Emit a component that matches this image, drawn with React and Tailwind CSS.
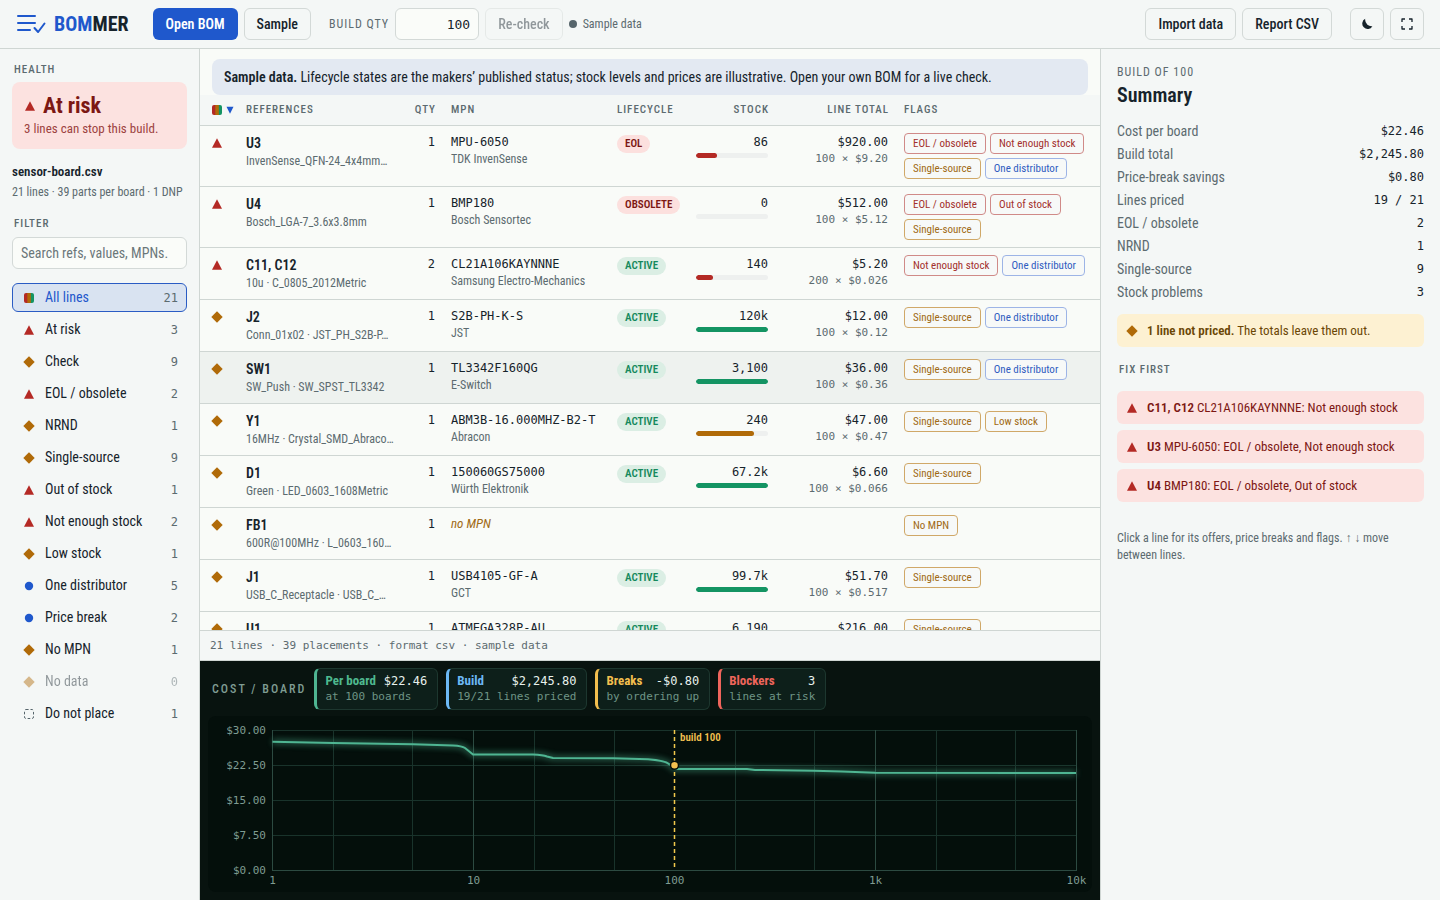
import clsx from "clsx";

const filters = [
    { label: "All lines", count: 21, icon: "all", active: true },
    { label: "At risk", count: 3, icon: "risk" },
    { label: "Check", count: 9, icon: "check" },
    { label: "EOL / obsolete", count: 2, icon: "risk" },
    { label: "NRND", count: 1, icon: "check" },
    { label: "Single-source", count: 9, icon: "check" },
    { label: "Out of stock", count: 1, icon: "risk" },
    { label: "Not enough stock", count: 2, icon: "risk" },
    { label: "Low stock", count: 1, icon: "check" },
    { label: "One distributor", count: 5, icon: "info" },
    { label: "Price break", count: 2, icon: "info" },
    { label: "No MPN", count: 1, icon: "check" },
    { label: "No data", count: 0, icon: "check", muted: true },
    { label: "Do not place", count: 1, icon: "dnp" },
];

const lines = [
    { icon: "risk", ref: "U3", desc: "InvenSense_QFN-24_4x4mm…", qty: 1, mpn: "MPU-6050", maker: "TDK InvenSense", life: "EOL", stock: "86", level: 29, bar: "bg-[#b42a25]", total: "$920.00", calc: "100 × $9.20", flags: ["EOL / obsolete", "Not enough stock", "Single-source", "One distributor"] },
    { icon: "risk", ref: "U4", desc: "Bosch_LGA-7_3.6x3.8mm", qty: 1, mpn: "BMP180", maker: "Bosch Sensortec", life: "OBSOLETE", stock: "0", level: 0, bar: "bg-[#b42a25]", total: "$512.00", calc: "100 × $5.12", flags: ["EOL / obsolete", "Out of stock", "Single-source"] },
    { icon: "risk", ref: "C11, C12", desc: "10u · C_0805_2012Metric", qty: 2, mpn: "CL21A106KAYNNNE", maker: "Samsung Electro-Mechanics", life: "ACTIVE", stock: "140", level: 23, bar: "bg-[#b42a25]", total: "$5.20", calc: "200 × $0.026", flags: ["Not enough stock", "One distributor"] },
    { icon: "check", ref: "J2", desc: "Conn_01x02 · JST_PH_S2B-P…", qty: 1, mpn: "S2B-PH-K-S", maker: "JST", life: "ACTIVE", stock: "120k", level: 100, bar: "bg-[#149463]", total: "$12.00", calc: "100 × $0.12", flags: ["Single-source", "One distributor"] },
    { icon: "check", ref: "SW1", desc: "SW_Push · SW_SPST_TL3342", qty: 1, mpn: "TL3342F160QG", maker: "E-Switch", life: "ACTIVE", stock: "3,100", level: 100, bar: "bg-[#149463]", total: "$36.00", calc: "100 × $0.36", flags: ["Single-source", "One distributor"], selected: true },
    { icon: "check", ref: "Y1", desc: "16MHz · Crystal_SMD_Abraco…", qty: 1, mpn: "ABM3B-16.000MHZ-B2-T", maker: "Abracon", life: "ACTIVE", stock: "240", level: 80, bar: "bg-[#b06a08]", total: "$47.00", calc: "100 × $0.47", flags: ["Single-source", "Low stock"] },
    { icon: "check", ref: "D1", desc: "Green · LED_0603_1608Metric", qty: 1, mpn: "150060GS75000", maker: "Würth Elektronik", life: "ACTIVE", stock: "67.2k", level: 100, bar: "bg-[#149463]", total: "$6.60", calc: "100 × $0.066", flags: ["Single-source"] },
    { icon: "check", ref: "FB1", desc: "600R@100MHz · L_0603_160…", qty: 1, flags: ["No MPN"] },
    { icon: "check", ref: "J1", desc: "USB_C_Receptacle · USB_C_…", qty: 1, mpn: "USB4105-GF-A", maker: "GCT", life: "ACTIVE", stock: "99.7k", level: 100, bar: "bg-[#149463]", total: "$51.70", calc: "100 × $0.517", flags: ["Single-source"] },
    { icon: "check", ref: "U1", qty: 1, mpn: "ATMEGA328P-AU", life: "ACTIVE", stock: "6,190", level: 100, bar: "bg-[#149463]", total: "$216.00", flags: ["Single-source"] },
];

const flagColors = {
    "EOL / obsolete": "border-[#d08a88] text-[#a3302c]",
    "Not enough stock": "border-[#d08a88] text-[#a3302c]",
    "Out of stock": "border-[#d08a88] text-[#a3302c]",
    "Single-source": "border-[#d0a868] text-[#a06a14]",
    "Low stock": "border-[#d0a868] text-[#a06a14]",
    "No MPN": "border-[#d0a868] text-[#a06a14]",
    "One distributor": "border-[#9db4e6] text-[#2f5cc0]",
};

const summary = [
    ["Cost per board", "$22.46"],
    ["Build total", "$2,245.80"],
    ["Price-break savings", "$0.80"],
    ["Lines priced", "19 / 21"],
    ["EOL / obsolete", "2"],
    ["NRND", "1"],
    ["Single-source", "9"],
    ["Stock problems", "3"],
];

const fixes = [
    { ref: "C11, C12", text: "CL21A106KAYNNNE: Not enough stock" },
    { ref: "U3", text: "MPU-6050: EOL / obsolete, Not enough stock" },
    { ref: "U4", text: "BMP180: EOL / obsolete, Out of stock" },
];

const kpis = [
    { name: "Per board", value: "$22.46", note: "at 100 boards", edge: "border-l-[#4fb592]", color: "text-[#4fb98f]" },
    { name: "Build", value: "$2,245.80", note: "19/21 lines priced", edge: "border-l-[#6cb8f5]", color: "text-[#6cb8f5]" },
    { name: "Breaks", value: "-$0.80", note: "by ordering up", edge: "border-l-[#f2be4e]", color: "text-[#f2be4e]" },
    { name: "Blockers", value: "3", note: "lines at risk", edge: "border-l-[#f0655c]", color: "text-[#f0655c]" },
];

const mono = "font-['DejaVu_Sans_Mono','Liberation_Mono',monospace]";
const label = "text-[11px] leading-[18px] font-medium tracking-[1px] text-[#5c6b70] uppercase";
const button = "h-8 rounded-md border border-[#d3d9d7] px-3 text-[14px] font-medium text-[#16232b]";

const StatusIcon = ({ type }) => (
    <svg width="12" height="12" viewBox="0 0 12 12" className="shrink-0" aria-hidden="true">
        {type === "risk" && <path d="M6 1.3 11 10.7H1z" fill="#b42a25" />}
        {type === "check" && <path d="M6 .3 11.7 6 6 11.7.3 6z" fill="#b06a08" />}
        {type === "info" && <circle cx="6" cy="6" r="4.2" fill="#1f58cc" />}
        {type === "dnp" && (
            <rect x="1.5" y="1.5" width="9" height="9" rx="1.5" fill="none" stroke="#56656b" strokeDasharray="2.6 1.9" />
        )}
        {type === "all" && (
            <>
                <defs>
                    <linearGradient id="mix">
                        <stop offset="0.33" stopColor="#b42a25" />
                        <stop offset="0.36" stopColor="#b06a08" />
                        <stop offset="0.64" stopColor="#b06a08" />
                        <stop offset="0.7" stopColor="#149463" />
                    </linearGradient>
                </defs>
                <rect x="1" y="1" width="10" height="10" rx="2" fill="url(#mix)" />
            </>
        )}
    </svg>
);

const Header = () => (
    <header className="flex shrink-0 items-center gap-1.5 border-b border-[#cfd6d3] bg-[#f4f7f6] px-4 py-2">
        {/* Logo */}
        <div className="mr-[18px] flex items-center gap-2">
            <svg width="30" height="22" viewBox="0 0 30 22" fill="none" stroke="#1f58cc" strokeWidth="2" strokeLinecap="round" strokeLinejoin="round">
                <path d="M2 3h17M2 10h17M2 17h12" />
                <path d="m18.5 15 3.6 4 6.4-8.500" />
            </svg>
            <span className="text-[20px] leading-8 font-bold text-[#16232b]">
                <span className="text-[#1f58cc]">BOM</span>MER
            </span>
        </div>

        <button className="h-8 rounded-md bg-[#1f58cc] px-[13px] text-[14px] font-semibold text-white">Open BOM</button>
        <button className={button}>Sample</button>
        <label htmlFor="qty" className="ml-3 text-[12px] tracking-[1px] text-[#5c6b70]">BUILD QTY</label>
        <input
            id="qty"
            defaultValue="100"
            className={clsx(mono, "h-8 w-[84px] rounded-md border border-[#d3d9d7] bg-[#fafcf9] px-2 text-right text-[13px] text-[#16232b]")}
        />
        <button disabled className={clsx(button, "opacity-45")}>Re-check</button>
        <span className="flex items-center gap-1.5 text-[12px] text-[#5c6b70]">
            <span className="size-2 rounded-full bg-[#56656b]" />
            Sample data
        </span>

        {/* Actions */}
        <div className="ml-auto flex gap-1.5">
            <button className={button}>Import data</button>
            <button className={button}>Report CSV</button>
            <button aria-label="Dark theme" className="ml-3 flex h-8 w-[34px] items-center justify-center rounded-md border border-[#d3d9d7]">
                <svg width="12" height="12" viewBox="0 0 12 12" fill="#16232b">
                    <path d="M4.2.8a5.4 5.4 0 1 0 7.2 7.4q-2.900.4-5-1.400Q3.700 4.300 4.200.8z" />
                </svg>
            </button>
            <button aria-label="Full screen" className="flex h-8 w-[34px] items-center justify-center rounded-md border border-[#d3d9d7]">
                <svg width="12" height="12" viewBox="0 0 12 12" fill="none" stroke="#16232b" strokeWidth="1.3" strokeLinejoin="round">
                    <path d="M1 4V1h3M8 1h3v3M11 8v3H8M4 11H1V8" />
                </svg>
            </button>
        </div>
    </header>
);

const Sidebar = () => (
    <aside className="w-[200px] shrink-0 border-r border-[#cfd6d3] bg-[#f4f7f6] px-3 pt-3">
        <h2 className={clsx(label, "pl-0.5")}>Health</h2>
        <div className="mt-[3px] rounded-lg bg-[#fce2e0] px-3 pt-2.5 pb-[11px] text-[#7c1713]">
            <div className="flex items-center gap-[7px] text-[22px] leading-7 font-bold">
                <StatusIcon type="risk" />
                At risk
            </div>
            <p className="text-[13px] leading-[18px] text-[#9c4340]">3 lines can stop this build.</p>
        </div>
        <p className="mt-3.5 text-[13px] leading-[18px] font-semibold text-[#16232b]">sensor-board.csv</p>
        <p className="mt-0.5 text-[12px] leading-[18px] whitespace-nowrap text-[#5c6b70]">21 lines · 39 parts per board · 1 DNP</p>
        <h2 className={clsx(label, "mt-3.5 pl-0.5")}>Filter</h2>
        <input
            aria-label="Search"
            placeholder="Search refs, values, MPNs."
            className="mt-1 h-8 w-full rounded-md border border-[#d3d9d7] bg-[#fafcf9] px-2 text-[14px] placeholder:text-[#6b7779]"
        />
        <ul className="mt-3.5 flex flex-col gap-[3px]">
            {filters.map((f) => (
                <li key={f.label}>
                    <button
                        className={clsx(
                            "flex h-[29px] w-full items-center gap-2.5 rounded-md border px-2 pl-2.5 text-left text-[14px]",
                            f.active ? "border-[#2a5cc4] bg-[#d9e3f1] text-[#1f58cc]" : "border-transparent text-[#16232b]",
                            f.muted && "opacity-45"
                        )}
                    >
                        <StatusIcon type={f.icon} />
                        {f.label}
                        <span className={clsx(mono, "ml-auto text-[12px] text-[#5c6b70]")}>{f.count}</span>
                    </button>
                </li>
            ))}
        </ul>
    </aside>
);

const Line = ({ line }) => (
    <tr className={clsx("h-13 border-b border-[#cfd6d3] align-top", line.selected && "bg-[#eef2ef]")}>
        <td className="pt-[11px] pl-[11px]">
            <StatusIcon type={line.icon} />
        </td>
        <td className="px-2 py-[7px]">
            <div className="text-[14px] leading-5 font-semibold">{line.ref}</div>
            <div className="truncate text-[12px] leading-4 text-[#5c6b70]">{line.desc}</div>
        </td>
        <td className={clsx(mono, "px-2 py-[7px] text-right text-[12px] leading-[18px]")}>{line.qty}</td>
        <td className="px-2 py-[7px] whitespace-nowrap">
            {line.mpn ? (
                <>
                    <div className={clsx(mono, "text-[12px] leading-[18px]")}>{line.mpn}</div>
                    <div className="text-[12px] leading-4 text-[#5c6b70]">{line.maker}</div>
                </>
            ) : (
                <em className="block text-[13px] leading-[18px] text-[#a06a14]">no MPN</em>
            )}
        </td>
        <td className="px-2 py-[9px]">
            {line.life && (
                <span
                    className={clsx(
                        "block w-fit rounded-full px-2 text-[11px] leading-[18px] font-semibold",
                        line.life === "ACTIVE" ? "bg-[#dbeee4] text-[#15895c]" : "bg-[#fce0de] text-[#7c1713]"
                    )}
                >
                    {line.life}
                </span>
            )}
        </td>
        <td className={clsx(mono, "px-2 py-[7px] text-right text-[12px] leading-[18px]")}>
            {line.stock}
            {line.stock && (
                <div className="mt-0.5 h-[5px] overflow-hidden rounded-full bg-[#eef0ef]">
                    <div className={clsx("h-full rounded-full", line.bar)} style={{ width: `${line.level}%` }} />
                </div>
            )}
        </td>
        <td className={clsx(mono, "px-2 py-[7px] text-right")}>
            <div className="text-[12px] leading-[18px]">{line.total}</div>
            <div className="text-[11px] leading-4 text-[#5c6b70]">{line.calc}</div>
        </td>
        <td className="px-2 py-[7px]">
            <div className="flex flex-wrap gap-1">
                {line.flags.map((flag) => (
                    <span key={flag} className={clsx("rounded border bg-[#f7f9f8] px-2 text-[11px] leading-[19px] whitespace-nowrap", flagColors[flag])}>
                        {flag}
                    </span>
                ))}
            </div>
        </td>
    </tr>
);

const BomTable = () => (
    <div className="min-h-0 flex-1 overflow-hidden bg-[#f9fbf8] pt-2.5">
        <p className="mx-3 rounded-lg bg-[#e3e9f2] px-3 py-2 text-[14px] leading-5">
            <b className="font-semibold">Sample data.</b> Lifecycle states are the makers’ published status; stock levels and prices are
            illustrative. Open your own BOM for a live check.
        </p>
        <table className="w-full table-fixed border-collapse">
            <colgroup>
                <col className="w-[38px]" />
                <col className="w-[164px]" />
                <col className="w-[41px]" />
                <col className="w-[166px]" />
                <col className="w-[79px]" />
                <col className="w-[88px]" />
                <col className="w-[120px]" />
                <col />
            </colgroup>
            <thead>
                <tr className={clsx(label, "h-[30px] border-b border-[#cfd6d3] bg-[#f4f7f6] text-left")}>
                    <th className="pl-[11px]">
                        <span className="flex items-center gap-[3px]">
                            <StatusIcon type="all" />
                            <svg width="8" height="8" viewBox="0 0 8 8" fill="#1f58cc">
                                <path d="M.5 .8h7L4 7.8z" />
                            </svg>
                        </span>
                    </th>
                    <th className="px-2 font-medium">References</th>
                    <th className="pr-[7px] text-right font-medium">Qty</th>
                    <th className="px-2 font-medium">MPN</th>
                    <th className="px-2 font-medium">Lifecycle</th>
                    <th className="pr-[7px] text-right font-medium">Stock</th>
                    <th className="pr-[7px] text-right font-medium">Line total</th>
                    <th className="px-2 font-medium">Flags</th>
                </tr>
            </thead>
            <tbody>
                {lines.map((line) => (
                    <Line key={line.ref} line={line} />
                ))}
            </tbody>
        </table>
    </div>
);

// Log x axis: 201 units per decade starting at x=64. Linear y axis: 35 units per $7.50.
const curve =
    "M64.5 25.8 125 27 205 28.2 245 29.5Q254 30 257 32L265 38.5H325Q335 38.8 339 40.5L345 42 405 42.2 440 43.2Q457 44.5 461 48L467 53H539L547 54 606 54.8 634 55.5 667 56.7 868 57";

const CostChart = () => (
    <svg viewBox="0 0 884 176" className="block w-full rounded-lg bg-[#040f0b]" role="img" aria-label="Cost per board by build quantity">
        <defs>
            <filter id="glow" x="-5%" y="-50%" width="110%" height="200%">
                <feGaussianBlur stdDeviation="3" />
            </filter>
        </defs>
        <g stroke="#19332b" shapeRendering="crispEdges">
            {[14.5, 49.5, 84.5, 119.5].map((y) => (
                <path key={y} d={`M64 ${y}H868`} />
            ))}
            {[125.5, 204.5, 326.5, 406.5, 527.5, 606.5, 728.5, 807.5].map((x) => (
                <path key={x} d={`M${x} 14V154`} />
            ))}
        </g>
        <path d="M64.5 14V154.5H868.5V14M265.5 14V154M667.5 14V154" fill="none" stroke="#2c4a41" shapeRendering="crispEdges" />
        <g fill="none" stroke="#4fb592" strokeLinejoin="round">
            <path d={curve} strokeWidth="4" opacity="0.6" filter="url(#glow)" />
            <path d={curve} strokeWidth="2" />
        </g>
        <path d="M466.5 14V154" stroke="#f2c94c" strokeWidth="1.5" strokeDasharray="4 3" />
        <circle cx="466.5" cy="49.3" r="4" fill="#f2c050" stroke="#040f0b" strokeWidth="1.5" />
        <text x="472" y="25" fill="#f2c050" fontSize="11" fontWeight="600">build 100</text>
        <g fill="#7f9c92" fontSize="11" className={mono}>
            {["$30.00", "$22.50", "$15.00", "$7.50", "$0.00"].map((t, i) => (
                <text key={t} x="58" y={18 + i * 35} textAnchor="end">{t}</text>
            ))}
            {["1", "10", "100", "1k", "10k"].map((t, i) => (
                <text key={t} x={64.5 + i * 201} y="168" textAnchor="middle">{t}</text>
            ))}
        </g>
    </svg>
);

const CostPanel = () => (
    <section className="shrink-0 bg-[#08130f] px-2 pt-[7px] pb-2">
        <div className="flex items-center gap-2">
            <h2 className="pl-1 text-[12px] leading-4 font-medium tracking-[2px] text-[#7f9c92]">COST / BOARD</h2>
            {kpis.map((k) => (
                <div key={k.name} className={clsx("rounded-md border border-l-3 border-[#1d372f] bg-[#0d1f1a] py-1 pr-2.5 pl-2", k.edge)}>
                    <div className="flex justify-between gap-2 leading-4">
                        <b className={clsx("text-[13px] font-bold", k.color)}>{k.name}</b>
                        <span className={clsx(mono, "text-[12px] font-medium text-[#e8f1ed]")}>{k.value}</span>
                    </div>
                    <div className={clsx(mono, "text-[11px] leading-4 text-[#6f9586]")}>{k.note}</div>
                </div>
            ))}
        </div>
        <div className="mt-1.5">
            <CostChart />
        </div>
    </section>
);

const Summary = () => (
    <aside className="w-[340px] shrink-0 border-l border-[#cfd6d3] bg-[#f4f7f6] px-4 pt-[15px]">
        <p className="text-[12px] leading-4 tracking-[1px] text-[#5c6b70]">BUILD OF 100</p>
        <h1 className="mt-0.5 text-[20px] leading-[26px] font-semibold">Summary</h1>
        <dl className="mt-3">
            {summary.map(([name, value]) => (
                <div key={name} className="flex h-[23px] items-start justify-between">
                    <dt className="text-[14px] leading-[22px] text-[#5c6b70]">{name}</dt>
                    <dd className={clsx(mono, "text-[12px] leading-[22px]")}>{value}</dd>
                </div>
            ))}
        </dl>
        <p className="mt-2.5 flex items-center gap-[9px] rounded-md bg-[#fdf1d2] px-[9px] text-[13px] leading-[33px] text-[#6a4605]">
            <StatusIcon type="check" />
            <span>
                <b className="font-semibold">1 line not priced.</b> The totals leave them out.
            </span>
        </p>
        <h2 className={clsx(label, "mt-3.5 pl-0.5")}>Fix first</h2>
        <ul className="mt-3 flex flex-col gap-1.5">
            {fixes.map((fix) => (
                <li key={fix.ref}>
                    <button className="flex w-full items-center gap-[9px] rounded-md bg-[#fce2e0] px-[9px] text-left text-[13px] leading-[33px] text-[#7c1713]">
                        <StatusIcon type="risk" />
                        <span>
                            <b className="font-semibold">{fix.ref}</b> {fix.text}
                        </span>
                    </button>
                </li>
            ))}
        </ul>
        <p className="mt-7 text-[12px] leading-[17px] text-[#5c6b70]">
            Click a line for its offers, price breaks and flags. ↑ ↓ move between lines.
        </p>
    </aside>
);

const App = () => {
    return (
        <div className="flex h-screen flex-col bg-[#f4f7f6] font-['Roboto_Condensed','Liberation_Sans_Narrow',sans-serif] text-[#16232b]">
            <Header />
            <div className="flex min-h-0 flex-1">
                <Sidebar />
                <main className="flex min-w-0 flex-1 flex-col">
                    <BomTable />
                    <p className={clsx(mono, "shrink-0 border-y border-[#cfd6d3] px-2.5 text-[11px] leading-[29px] text-[#5c6b70]")}>
                        21 lines · 39 placements · format csv · sample data
                    </p>
                    <CostPanel />
                </main>
                <Summary />
            </div>
        </div>
    );
};

export default App;
